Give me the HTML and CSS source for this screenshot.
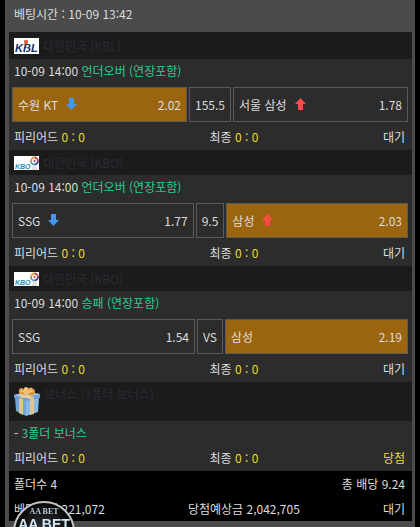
FILE: index.html
```html
<!DOCTYPE html>
<html lang="ko">

<head>
    <meta charset="UTF-8">
    <meta name="viewport" content="width=device-width, initial-scale=1.0">
    <title>베팅내역</title>
    <link rel="stylesheet" href="styles.css">
</head>

<body>
    <main class="panel">
        <header class="bet-time">베팅시간 : 10-09 13:42</header>

        <section>
            <h2 class="league basketball">
                <svg class="logo" viewBox="0 0 25 16" width="25" height="16" aria-hidden="true">
                    <rect width="25" height="16" fill="#fff" />
                    <text x="1" y="14" font-size="11" font-weight="bold" font-style="italic" fill="#202a58">KBL</text>
                    <path d="M11 15l3-8" stroke="#fff" stroke-width="1" />
                    <circle cx="12" cy="4" r="2.200" fill="#df642d" />
                </svg>
                대한민국 [KBL]
            </h2>
            <div class="game">
                <div class="title">10-09 14:00 <span class="market">언더오버 (연장포함)</span></div>
                <div class="picks">
                    <div class="pick selected">
                        <span class="team">수원 KT</span>
                        <svg class="arrow down" width="11" height="12"><use href="#arrow-down" /></svg>
                        <span class="odds">2.02</span>
                    </div>
                    <div class="line">155.5</div>
                    <div class="pick">
                        <span class="team">서울 삼성</span>
                        <svg class="arrow up" width="11" height="12"><use href="#arrow-up" /></svg>
                        <span class="odds">1.78</span>
                    </div>
                </div>
                <div class="score">
                    <span>피리어드 <b>0 : 0</b></span>
                    <span>최종 <b>0 : 0</b></span>
                    <span>대기</span>
                </div>
            </div>
        </section>

        <section>
            <h2 class="league">
                <svg class="logo" width="25" height="14" aria-hidden="true"><use href="#kbo" /></svg>
                대한민국 [KBO]
            </h2>
            <div class="game">
                <div class="title">10-09 14:00 <span class="market">언더오버 (연장포함)</span></div>
                <div class="picks">
                    <div class="pick">
                        <span class="team">SSG</span>
                        <svg class="arrow down" width="11" height="12"><use href="#arrow-down" /></svg>
                        <span class="odds">1.77</span>
                    </div>
                    <div class="line">9.5</div>
                    <div class="pick selected">
                        <span class="team">삼성</span>
                        <svg class="arrow up" width="11" height="12"><use href="#arrow-up" /></svg>
                        <span class="odds">2.03</span>
                    </div>
                </div>
                <div class="score">
                    <span>피리어드 <b>0 : 0</b></span>
                    <span>최종 <b>0 : 0</b></span>
                    <span>대기</span>
                </div>
            </div>
        </section>

        <section>
            <h2 class="league">
                <svg class="logo" width="25" height="14" aria-hidden="true"><use href="#kbo" /></svg>
                대한민국 [KBO]
            </h2>
            <div class="game">
                <div class="title">10-09 14:00 <span class="market">승패 (연장포함)</span></div>
                <div class="picks">
                    <div class="pick">
                        <span class="team">SSG</span>
                        <span class="odds">1.54</span>
                    </div>
                    <div class="line">VS</div>
                    <div class="pick selected">
                        <span class="team">삼성</span>
                        <span class="odds">2.19</span>
                    </div>
                </div>
                <div class="score">
                    <span>피리어드 <b>0 : 0</b></span>
                    <span>최종 <b>0 : 0</b></span>
                    <span>대기</span>
                </div>
            </div>
        </section>

        <section>
            <h2 class="league bonus">
                <svg class="logo" viewBox="0 0 26 31" width="26" height="31" aria-hidden="true">
                    <path d="M1 12l11 2v16L2 25z" fill="#71a5d8" />
                    <path d="M12 14l13-3-1 15-12 4z" fill="#8bb9e5" />
                    <path d="M0 9l12-3 14 2v4l-14 3L0 12z" fill="#6ba0d5" />
                    <path d="M0 9l12-3 14 2-14 4z" fill="#9ac4ea" />
                    <path d="M5 12l4 1v16l-4-2zM16 12l4-1v17l-4 1z" fill="#dfc58b" />
                    <path d="M4 9l4-1 12 3-4 2zM18 7l4 1-13 4-4-1z" fill="#e9cf94" />
                    <path d="M13 8C8 10 4 8 5 4c1-4 6-2 8 4z" fill="#e3a24c" />
                    <path d="M13 8c4 3 9 1 8-3-1-4-6-3-8 3z" fill="#dc9138" />
                    <path d="M13 8C9 5 9 1 12 1s4 3 1 7z" fill="#f3c27b" />
                    <path d="M13 8c0-4 3-8 5-6s-1 5-5 6z" fill="#edb25e" />
                    <path d="M7 5c2 0 4 1 5 3M19 5c-2 0-4 1-5 3" fill="none" stroke="#fbe0b0" />
                </svg>
                보너스 [3폴더 보너스]
            </h2>
            <div class="game">
                <div class="title">- <span class="market">3폴더 보너스</span></div>
                <div class="score">
                    <span>피리어드 <b>0 : 0</b></span>
                    <span>최종 <b>0 : 0</b></span>
                    <b>당첨</b>
                </div>
            </div>
        </section>

        <footer class="summary">
            <div class="total">
                <span>폴더수 4</span>
                <span>총 배당 9.24</span>
            </div>
            <div class="total">
                <span>베팅금액 221,072</span>
                <span>당첨예상금 2,042,705</span>
                <span>대기</span>
            </div>
        </footer>
    </main>

    <div class="badge">
        <span class="badge-small">AA BET</span>
        <span class="badge-big">AA BET</span>
    </div>

    <!-- shared icons -->
    <svg class="defs" width="0" height="0" aria-hidden="true">
        <defs>
            <path id="arrow-down" d="M3 0h5v6h3l-5.500 6L0 6h3z" />
            <path id="arrow-up" d="M3 12h5V6h3L5.500 0 0 6h3z" />
            <g id="kbo">
                <rect width="25" height="14" fill="#fff" />
                <path d="M17 5a3.500 3.500 0 0 1 3.500-3.500" fill="none" stroke="#e0a13a" stroke-width="1.800" />
                <path d="M20.500 1.500A3.500 3.500 0 0 1 24 5" fill="none" stroke="#c9404d" stroke-width="1.800" />
                <path d="M24 5a3.500 3.500 0 0 1-3.500 3.500" fill="none" stroke="#39458c" stroke-width="1.800" />
                <path d="M20.500 8.500A3.500 3.500 0 0 1 17 5" fill="none" stroke="#4c9bb0" stroke-width="1.800" />
                <circle cx="20.500" cy="5" r="1.200" fill="#d65a63" />
                <path d="M18 11h5M18 13h5" stroke="#bcc9cc" />
                <text x="1" y="13" font-size="7" font-weight="bold" font-style="italic" fill="#2a8fb5">KBO</text>
            </g>
        </defs>
    </svg>
</body>

</html>
```
FILE: styles.css
```css
* {
    margin: 0;
    padding: 0;
    box-sizing: border-box;
}

body {
    font-family: 'Noto Sans CJK KR', sans-serif;
    font-size: 12px;
    line-height: 24px;
    color: #dcdcdc;
    background: #000;
}

.defs {
    position: absolute;
}

.panel {
    min-height: 100vh;
    margin: 0 5px;
    padding: 0 3px 6px 4px;
    background: #4b4b4b;
}

.bet-time {
    height: 32px;
    padding: 2px 5px;
}

.league {
    display: flex;
    align-items: center;
    gap: 4px;
    min-height: 25px;
    padding: 0 5px;
    font-size: 12px;
    font-weight: 400;
    color: #292c37;
    background: #1b1b1b;
}

.basketball {
    min-height: 27px;
}

.bonus {
    align-items: flex-start;
    min-height: 39px;
}

.bonus .logo {
    margin: 4px 0;
}

.logo {
    flex: none;
    font-family: 'Liberation Sans', sans-serif;
}

.game {
    background: #2c2c2c;
}

.title {
    padding: 0 5px;
}

.market {
    color: #25cf91;
}

.picks {
    display: flex;
    gap: 2px;
    margin: 4px 4px 2px 3px;
}

.pick,
.line {
    display: flex;
    align-items: center;
    height: 35px;
    padding: 0 5px;
    border: 1px solid #5a5a5a;
}

.pick {
    flex: 1;
}

.selected {
    background: #9b640e;
}

.arrow {
    margin: 0 8px 2px;
}

.down {
    fill: #4397ee;
}

.up {
    fill: #f94b47;
}

.odds {
    margin-left: auto;
}

.score,
.total {
    display: flex;
    justify-content: space-between;
    padding: 0 7px 0 5px;
    line-height: 26px;
}

b {
    font-weight: 400;
    color: #e5dc2d;
}

.summary {
    background: #000;
}

.total {
    line-height: 25px;
}

/* floating site logo, hangs off the bottom edge */
.badge {
    position: fixed;
    left: 13px;
    bottom: -36px;
    display: flex;
    flex-direction: column;
    align-items: center;
    width: 62px;
    height: 62px;
    padding-top: 4px;
    border: 2px solid #c4c4c4;
    border-radius: 50%;
    background: radial-gradient(circle, #34383c, #080808 70%);
    white-space: nowrap;
}

.badge-small {
    font: bold 8px/10px 'Liberation Serif', serif;
    color: #b7c9d6;
}

.badge-big {
    font: bold 14px/14px 'Liberation Sans', sans-serif;
    color: #d3e8f5;
}
```
